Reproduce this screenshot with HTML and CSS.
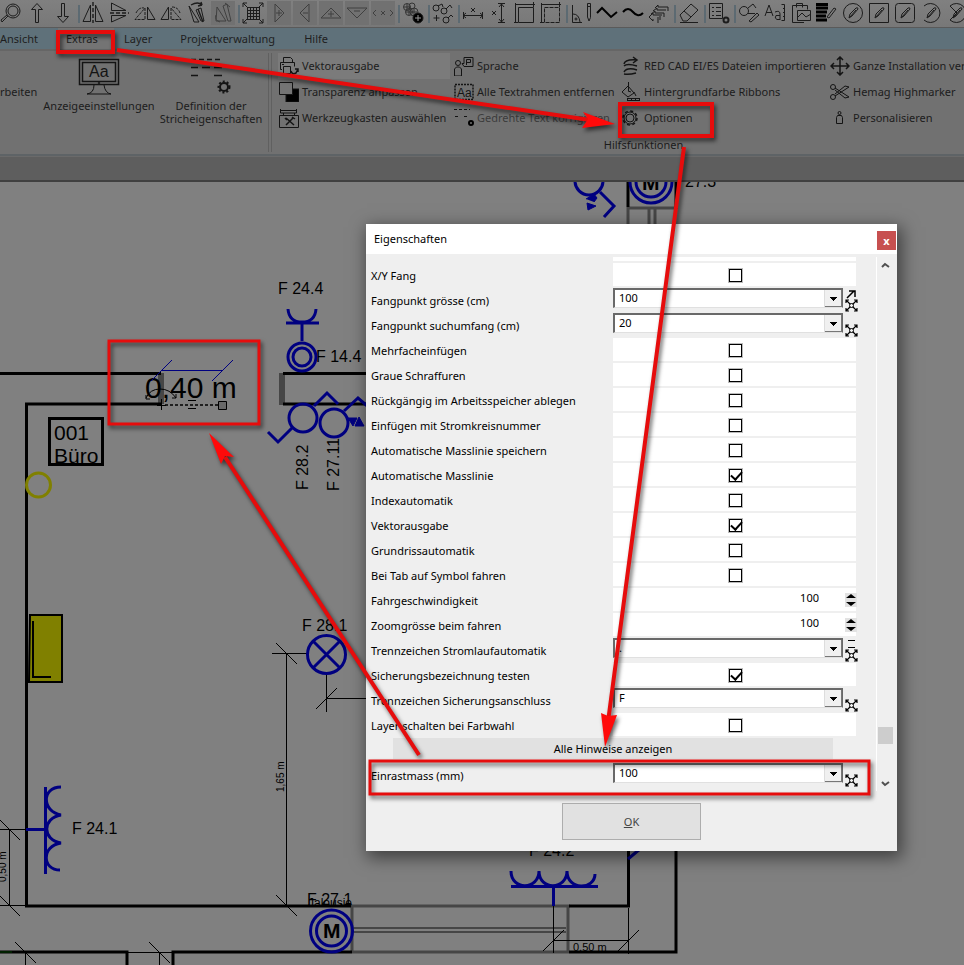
FILE: index.html
```html
<!DOCTYPE html>
<html lang="de">
<head>
<meta charset="utf-8">
<title>Eigenschaften</title>
<link rel="stylesheet" href="styles.css">
</head>
<body>
<svg class="defs" aria-hidden="true">
  <symbol id="expand" viewBox="0 0 13 13"><path d="M1 4V1h3M9 1h3v3M12 9v3H9M4 12H1V9M1 1l11 11M12 1L1 12" fill="none" stroke="#000" stroke-width="1.2"/><circle cx="6.5" cy="6.5" r="2" fill="#efefef" stroke="#000"/></symbol>
  <symbol id="pen" viewBox="0 0 24 24"><path d="M8 17l1-4 6-6q2-1 2 1l-6 7-3 2M9 16l6-7"/></symbol>
</svg>
<div class="app">
  <div class="toolbar">
    <button aria-label="Suchen"><svg viewBox="0 0 24 24"><circle cx="14" cy="10" r="7"/><circle cx="14" cy="10" r="5"/><path d="M9 15l-6 6-1-2 6-5"/></svg></button>
    <button aria-label="Nach oben"><svg viewBox="0 0 24 24"><path d="M10.500 21.500V8.500h-4l5.500-6 5.500 6h-4v13z"/></svg></button>
    <button aria-label="Nach unten"><svg viewBox="0 0 24 24"><path d="M10.500 2.500v13h-4l5.500 6 5.500-6h-4v-13z"/></svg></button>
    <i class="sep"></i>
    <button aria-label="Horizontal spiegeln"><svg viewBox="0 0 24 24"><path d="M9.500 4v16.500H2zM14.500 4v16.500H22z"/><path d="M12 1v21" stroke-width="1.4" stroke-dasharray="4 2"/></svg></button>
    <button aria-label="Vertikal spiegeln"><svg viewBox="0 0 24 24"><path d="M4.500 2v7.500H19zM4.500 21v-6.500H19z"/><path d="M3 12h19" stroke-width="1.4" stroke-dasharray="4 2"/></svg></button>
    <button aria-label="Spiegeln links"><svg viewBox="0 0 24 24"><path d="M14.500 6v12.500H22z"/><path d="M12 7v11.500H2zM3 12q3-6 8-5" stroke-dasharray="3 1"/></svg></button>
    <button aria-label="Spiegeln rechts"><svg viewBox="0 0 24 24"><path d="M9.500 6v12.500H2z"/><path d="M12 7v11.500h10zM13 6q6 0 8 6" stroke-dasharray="3 1"/></svg></button>
    <button aria-label="Drehen"><svg viewBox="0 0 24 24"><path d="M4 5l10 16H9zM11 9l5-2 3 13h-3z"/><path d="M6 4q7-4 11 0l-1-3M17 4l-4 1M13 8l5 13" stroke-width="1.4"/></svg></button>
    <button class="on" aria-label="Drehen zurück"><svg viewBox="0 0 24 24"><path d="M6 6l9 14H5zM12 5l4-2 4 17h-3zM14 2l5 4M5 14q-2 5 4 7"/></svg></button>
    <i class="sep"></i>
    <button aria-label="Raster"><svg viewBox="0 0 24 24"><path d="M6.500 6v12M9.500 6v12M12.500 6v12M15.500 6v12M18.500 6v12M6 6.500h12M6 9.500h12M6 12.500h12M6 15.500h12M6 18.500h12"/><path d="M6 6L2 2M18 6l4-4M6 18l-4 4M18 18l4 4M2 6V2h4M18 2h4v4M22 18v4h-4M6 22H2v-4"/></svg></button>
    <button class="on" aria-label="Rechts plus"><svg viewBox="0 0 24 24"><path d="M8 3v18l9-9zM9 12h6M12 9v6"/></svg></button>
    <button class="on" aria-label="Links minus"><svg viewBox="0 0 24 24"><path d="M16 3v18l-9-9zM10 12h5"/></svg></button>
    <button class="on" aria-label="Oben plus"><svg viewBox="0 0 24 24"><path d="M2 17h20L12 7zM12 10v6M9 13h6"/></svg></button>
    <button class="on" aria-label="Unten minus"><svg viewBox="0 0 24 24"><path d="M2 7h20L12 17zM9 10h6"/></svg></button>
    <button class="on" aria-label="X-Achse"><svg viewBox="0 0 24 24"><path d="M5 9l-3 3 3 3M19 9l3 3-3 3M10 10l4 4M14 10l-4 4"/></svg></button>
    <i class="sep"></i>
    <button aria-label="Verschieben"><svg viewBox="0 0 24 24"><g stroke="#333"><circle cx="6" cy="6" r="3.500"/><circle cx="11" cy="5" r="3"/><circle cx="8" cy="11" r="3.500"/><circle cx="13" cy="11" r="4"/><path d="M3 6h6M6 3v6M5 11h6M8 8v6M10 11h6M13 8v6"/></g><circle cx="17" cy="17" r="5" fill="#000"/><path d="M14 17h6M17 14v6" stroke="#999"/></svg></button>
    <i class="sep"></i>
    <button aria-label="Symbole hinzufügen"><svg viewBox="0 0 24 24"><circle cx="5" cy="7" r="3"/><circle cx="13" cy="10" r="3"/><circle cx="15" cy="19" r="3"/><path d="M7 5l4-2 1 3M15 8l4-4 2 3M17 17l3-3 2 2M5.500 14v6M2.500 17h6"/></svg></button>
    <i class="sep"></i>
    <button aria-label="Mass horizontal"><svg viewBox="0 0 24 24"><path d="M2.500 11v7M21.500 11v7M2 14.500h20M5 12l-3 2.500 3 2.500M19 12l3 2.500-3 2.500M10 7l4 4M14 7l-4 4"/></svg></button>
    <button aria-label="Mass vertikal"><svg viewBox="0 0 24 24"><path d="M11 2.500h7M11 21.500h7M14.500 3v18M12 6l2.500-3L17 6M12 18l2.500 3 2.500-3M5 10l4 4M9 10l-4 4"/></svg></button>
    <button aria-label="Rechteck vermassen"><svg viewBox="0 0 24 24"><path d="M5.500 6.500h15v15h-15zM2 3.500h20M2.500 2v20M1 21.500h4M20.500 1v5"/></svg></button>
    <button aria-label="Fläche vermassen"><svg viewBox="0 0 24 24"><path d="M5.500 6.500h15v15h-15z" stroke-dasharray="4 1"/><path d="M2 3.500h20M2.500 2v20M1 21.500h4M20.500 1v5"/></svg></button>
    <i class="sep"></i>
    <button aria-label="Winkel"><svg viewBox="0 0 24 24"><path d="M3.500 4v17.500H13M4 13q6 0 7 8M18.500 2.500h3v14L20 20l-1.500-4zM18 5.500h4"/><circle cx="7" cy="18" r="1"/></svg></button>
    <button aria-label="Polylinie"><svg viewBox="0 0 24 24"><path d="M2 12l5-5 9 9 6-5" stroke="#000" stroke-width="2"/></svg></button>
    <button aria-label="Kurve"><svg viewBox="0 0 24 24"><path d="M2 11q5-6 10 0t10 1" stroke="#000" stroke-width="2"/></svg></button>
    <button aria-label="Pfeile"><svg viewBox="0 0 24 24"><path d="M8 7l3-3v2h10M6 10l4-3v2h9M4 13l4-3v2h9M2 16l4-4v2h9M2 16l4 4v-2M11 16v6M13 15v4M17 12v4M21 6v4"/></svg></button>
    <i class="sep"></i>
    <button aria-label="Radierer"><svg viewBox="0 0 24 24"><path d="M3 14L14 3l7 6-11 11H6zM7 10l7 6M3 21.500h18"/></svg></button>
    <i class="sep"></i>
    <button aria-label="Liste einstellen"><svg viewBox="0 0 24 24"><path d="M2.500 2.500h13v15h-13zM5 6.500h2M5 10.500h2M5 14.500h2M9 6.500h5M9 10.500h5M9 14.500h5"/><circle cx="19" cy="19" r="2.500" stroke-width="2"/></svg></button>
    <i class="sep"></i>
    <button aria-label="Symbol bearbeiten"><svg viewBox="0 0 24 24"><circle cx="7" cy="10" r="4.500"/><path d="M11 7l5-4 3 4M11 12.500h7M12 20l8-8 2 2-8 7z"/></svg></button>
    <button aria-label="Textgrösse"><svg viewBox="0 0 24 24"><path d="M2 15L6 4l4 11M3 11.500h6M12 11q5-2 5 2v6M17 14.500h-4q-2 3 1 4h3M18.500 3.500h3v16h-3M20 7.500h2M20 11.500h2M20 15.500h2"/></svg></button>
    <button aria-label="Einfügen"><svg viewBox="0 0 24 24"><path d="M15 21.500H3.500v-17h15v4M7.500 6.500v-4h6v4M8.500 9.500h13v10h-13zM8 17l5-5 4 4 5-3"/></svg></button>
    <button aria-label="Linienstärke"><svg viewBox="0 0 24 24"><path d="M1 3.500h12M1 7h12M1 11h11M1 15h10M1 19h11" stroke="#000" stroke-width="3"/><path d="M12 16l7-9 2 1-7 9z"/></svg></button>
    <button aria-label="Kreis"><svg viewBox="0 0 24 24"><circle cx="12" cy="12" r="9.500"/><use href="#pen"/></svg></button>
    <button aria-label="Rechteck"><svg viewBox="0 0 24 24"><path d="M2.500 2.500h19v19h-19z"/><use href="#pen"/></svg></button>
    <button aria-label="Abgerundetes Rechteck"><svg viewBox="0 0 24 24"><rect x="2.500" y="2.500" width="19" height="19" rx="3"/><use href="#pen"/></svg></button>
    <button aria-label="Bogen"><svg viewBox="0 0 24 24"><path d="M5 5a9.500 9.500 0 1 1 0 14"/><use href="#pen"/></svg></button>
    <button aria-label="Sektor"><svg viewBox="0 0 24 24"><path d="M5 5a9.500 9.500 0 1 1 0 14l7-7z"/><use href="#pen"/></svg></button>
  </div>
  <nav class="tabs">
    <a href="#" class="first">Ansicht</a><a href="#" class="active">Extras</a><a href="#" class="layer">Layer</a><a href="#" class="project">Projektverwaltung</a><a href="#">Hilfe</a>
  </nav>
  <div class="ribbon">
    <div class="group view">
      <button class="edge">rbeiten</button>
      <button class="big display">
        <svg viewBox="0 0 42 38"><path d="M1.500 1.500h39v25h-39zM4.500 4.500h33v19h-33z" stroke-width="1.500"/><path d="M16 27q0 8-7 9h24q-6-1-7-9"/><circle cx="21" cy="25" r=".8"/><text x="11" y="19" font-size="16">Aa</text></svg>
        Anzeigeeinstellungen
      </button>
      <button class="big">
        <svg viewBox="0 0 42 38"><path d="M1 1.500h31" stroke-dasharray="5 3" stroke-width="1.500"/><path d="M1 9.500h7M12 9.500h8M24 9.500h8M1 17.500h7M24 17.500h8" stroke-width="1.500"/><circle cx="34" cy="29" r="4" stroke-width="2"/><circle cx="34" cy="29" r="5.500" stroke-width="2" stroke-dasharray="2 2"/></svg>
        Definition der<br>Stricheigenschaften
      </button>
    </div>
    <div class="group tools">
      <div class="cols">
        <div class="col">
          <button class="hot"><svg viewBox="0 0 20 20"><path d="M4.500 6.500v-5h7l2 2v3M3 13.500H1.500v-7h14v4M4.500 10.500h7v7h-7zM3 8.500h2"/><path d="M12 15q1 4 5 2l2-4M16 13h3v3" stroke-width="1.500"/></svg>Vektorausgabe</button>
          <button><svg viewBox="0 0 20 20"><path d="M7 7h13v13H7z" fill="#000"/><path d="M.5.5h13v12H.5z" fill="#747474"/></svg>Transparenz anpassen</button>
          <button><svg viewBox="0 0 20 20"><path d="M1.500 1v4h16V1M2 2.500h16M.5 7.500h19v12H.5zM4.500 7V5M15.500 7V5"/><path d="M7 10l8 7M14 10l-7 7M6 10l2 2M13 9l3 2" stroke-width="1.500"/></svg>Werkzeugkasten auswählen</button>
        </div>
        <div class="col">
          <button><svg viewBox="0 0 20 20"><circle cx="4" cy="7" r="2.500"/><path d="M.5 20v-7l2-2h3l2 2v7zM8 7.500h2v-6h9v9h-9zM12.500 9V3.500h4v3h-4"/></svg>Sprache</button>
          <button><svg viewBox="0 0 20 20"><path d="M1 2.500h18v15H1z" stroke-width="1.500" stroke-dasharray="2 1"/><text x="3" y="15" font-size="12">Aa</text></svg>Alle Textrahmen entfernen</button>
          <button class="dim"><svg viewBox="0 0 20 20"><path d="M0 1.500h16M1 8.500h5M10 8.500h5" stroke-dasharray="3 2"/><circle cx="17" cy="15" r="2" stroke="#000" stroke-width="2"/></svg>Gedrehte Text korrigieren</button>
        </div>
        <div class="col">
          <button><svg viewBox="0 0 20 20"><path d="M3 8q1-5 13-4M12 1l4 3-4 3M3 10q3-3 13 0M3 16q3-5 13-2M3 18q5 1 12-1" stroke-width="1.500"/></svg>RED CAD EI/ES Dateien importieren</button>
          <button><svg viewBox="0 0 20 20"><path d="M1 10l6-6 6 7-6 4zM7.500 9V0M7 9l3 1M6 18.500h13M6 16.500h13M6.500 16v3M10.500 16v3M14.500 16v3M18.500 16v3M13 10l2 4"/></svg>Hintergrundfarbe Ribbons</button>
          <button><svg viewBox="0 0 20 20"><circle cx="9" cy="10" r="4"/><circle cx="9" cy="10" r="6"/><circle cx="9" cy="10" r="7" stroke-width="1.500" stroke-dasharray="3 2.500"/></svg>Optionen</button>
        </div>
        <div class="col last">
          <button><svg viewBox="0 0 20 20"><path d="M10 1v18M1 10h18M7 4l3-3 3 3M7 16l3 3 3-3M4 7l-3 3 3 3M16 7l3 3-3 3" stroke-width="1.500"/></svg>Ganze Installation verschieben</button>
          <button><svg viewBox="0 0 20 20"><circle cx="3" cy="5" r="2.500"/><circle cx="3" cy="15" r="2.500"/><path d="M5 6l14 9-4 1-10-8M5 14l14-9-4-1-10 8"/></svg>Hemag Highmarker</button>
          <button><svg viewBox="0 0 20 20"><path d="M7.500 7.500h4l1 2v6h-6v-6z"/><circle cx="9.500" cy="5" r="1.500"/></svg>Personalisieren</button>
        </div>
      </div>
      <div class="caption">Hilfsfunktionen</div>
    </div>
  </div>
  <div class="band"></div>
  <main class="plan">
    <svg class="drawing" role="img" aria-label="Grundriss">
      <g transform="translate(0 -182)" fill="none" stroke-linecap="butt">
        <text x="573" y="951" fill="#000" class="mid">0,50 m</text>
        <g stroke="#464646" stroke-width="3">
          <path d="M351 906h219M352 906v47M352 952h217M568 906v47M628 207v20M628 208h48M649 209v20M655 209v20"/>
          <path d="M353 928h213M353 932h213" stroke-width="2"/>
          <path d="M161 373v31M282 373v32" stroke-width="6"/>
        </g>
        <g stroke="#000" stroke-width="3">
          <path d="M0 373.500h161M283 373.500h90M283 404h90M161 404H26.500v502H351M569 906h59.500V840M569 952h107V840M0 952h127v14M352 952H173v14M628 175v32M676 175v34"/>
          <path d="M49.500 418.500h53v46h-53z"/>
          <path d="M30 615h32v67H29z" fill="#808000" stroke-width="2"/>
          <path d="M33 621v56h18" stroke-width="2"/>
        </g>
        <g stroke="#000" stroke-width="1">
          <path d="M272 653.500h35M286.500 653v253M276 643l21 21M276 895l21 21M326.500 674v38M326 698.500h60M316 709l21-21"/>
          <path d="M0 829.500h27M9.500 829v76M0 905.500h26M-1 819l21 21M-1 895l21 21M15 942l21 21M25.500 953v13M127 952.500h46M159.500 952v14M149 942l21 21M553.500 906v47M628.500 908v46M553 940.500h75M543 951l21-21M618 951l21-21"/>
        </g>
        <path d="M0 952h12" stroke="#004000"/>
        <g fill="#000" class="small">
          <text transform="translate(284 792) rotate(-90)">1,65 m</text>
          <text transform="translate(6 882) rotate(-90)">0,50 m</text>
        </g>
        <g fill="#000" class="cad">
          <text x="278" y="294">F 24.4</text>
          <text x="316" y="362">F 14.4</text>
          <text x="302" y="631">F 28.1</text>
          <text x="72" y="834">F 24.1</text>
          <text x="307" y="905">F 27.1</text>
          <text x="529" y="856">F 24.2</text>
          <text x="685" y="187">27.3</text>
          <text transform="translate(308 490) rotate(-90)">F 28.2</text>
          <text transform="translate(339 491) rotate(-90)">F 27.11</text>
          <text x="308" y="907" class="blind">Jalousie</text>
          <text x="54" y="440" class="room">001</text>
          <text x="54" y="463" class="room">Büro</text>
          <text x="145" y="398" class="measure">0,40 m</text>
        </g>
        <circle cx="38.500" cy="485" r="12" stroke="#808000" stroke-width="3"/>
        <g stroke="#000080" stroke-width="3">
          <circle cx="302" cy="357" r="14"/><circle cx="302" cy="357" r="9"/>
          <path d="M302 341V323M286 323h33M288 309q1 13 14 13t14-13"/>
          <circle cx="303" cy="418" r="14"/><circle cx="334" cy="423" r="14"/>
          <path d="M268 432l10 10 15-15M314 406l13-13 11 11M344 411l14-13 14 12"/>
          <path d="M348 418h9l-4 8zM355 426h9l-5-9z" fill="#000080" stroke-width="1"/>
          <circle cx="326.500" cy="654.500" r="19"/><path d="M313 641l27 27M340 641l-27 27"/>
          <path d="M26 829.500h20M45.500 787v87M61 787c-20 0-19 25 0 28c-19 3-19 25 0 28c-20 3-19 27-1 27"/>
          <path d="M553.500 906V887M511 886.500h87M511 871c0 20 28 19 28 0c0 20 28 19 28 0c0 20 28 19 28 3"/>
          <circle cx="331.500" cy="931" r="21"/><circle cx="331.500" cy="931" r="15"/>
          <circle cx="651" cy="182" r="21"/><circle cx="651" cy="182" r="15"/>
          <circle cx="589" cy="181" r="14"/><path d="M600 192l14 14-10 11M628 859l12-10"/>
          <path d="M586 199l8-5 3 4-3 4M587 203l9 3-8 4z" fill="#000080" stroke-width="1"/>
        </g>
        <g fill="#000" class="motor"><text x="323" y="938">M</text><text x="642" y="190">M</text></g>
        <path d="M161 370.500h61M151 381l21-21M212 381l21-21" stroke="#000080"/>
        <g stroke="#000"><path d="M146 398q4-9 14-9t16 9M146 395v4h4M172 398h4v-4M161.500 399v11M157 405.500h9M188 400.500h8M188 408.500h8"/><path d="M165 405h54" stroke-width="1.500" stroke-dasharray="3 2"/><path d="M218.500 401.500h8v8h-8z" fill="#686868"/></g>
      </g>
    </svg>
  </main>
</div>

<section class="dialog" role="dialog" aria-labelledby="dialog-title">
  <header><h1 id="dialog-title">Eigenschaften</h1><button class="close" aria-label="Schliessen">x</button></header>
  <div class="body">
    <div class="props">
      <div class="stub"></div>
      <div class="row"><label for="p0">X/Y Fang</label><span class="cell"><input type="checkbox" id="p0"></span></div>
      <div class="row"><label for="p1">Fangpunkt grösse (cm)</label><span class="combo"><select id="p1"><option>100</option></select></span><svg class="expand up"><use href="#expand" y="9" width="13" height="13"/><path d="M2 8l7-7M4 1h6v6" fill="none" stroke="#000" stroke-width="1.500"/></svg></div>
      <div class="row"><label for="p2">Fangpunkt suchumfang (cm)</label><span class="combo"><select id="p2"><option>20</option></select></span><svg class="expand"><use href="#expand" width="13" height="13"/></svg></div>
      <div class="row"><label for="p3">Mehrfacheinfügen</label><span class="cell"><input type="checkbox" id="p3"></span></div>
      <div class="row"><label for="p4">Graue Schraffuren</label><span class="cell"><input type="checkbox" id="p4"></span></div>
      <div class="row"><label for="p5">Rückgängig im Arbeitsspeicher ablegen</label><span class="cell"><input type="checkbox" id="p5"></span></div>
      <div class="row"><label for="p6">Einfügen mit Stromkreisnummer</label><span class="cell"><input type="checkbox" id="p6"></span></div>
      <div class="row"><label for="p7">Automatische Masslinie speichern</label><span class="cell"><input type="checkbox" id="p7"></span></div>
      <div class="row"><label for="p8">Automatische Masslinie</label><span class="cell"><input type="checkbox" id="p8" checked></span></div>
      <div class="row"><label for="p9">Indexautomatik</label><span class="cell"><input type="checkbox" id="p9"></span></div>
      <div class="row"><label for="p10">Vektorausgabe</label><span class="cell"><input type="checkbox" id="p10" checked></span></div>
      <div class="row"><label for="p11">Grundrissautomatik</label><span class="cell"><input type="checkbox" id="p11"></span></div>
      <div class="row"><label for="p12">Bei Tab auf Symbol fahren</label><span class="cell"><input type="checkbox" id="p12"></span></div>
      <div class="row"><label for="p13">Fahrgeschwindigkeit</label><span class="cell number"><input type="text" id="p13" value="100"><svg class="spin" viewBox="0 0 12 14"><path d="M1 5l5-4 5 4zM1 9h10l-5 4z"/></svg></span></div>
      <div class="row"><label for="p14">Zoomgrösse beim fahren</label><span class="cell number"><input type="text" id="p14" value="100"><svg class="spin" viewBox="0 0 12 14"><path d="M1 5l5-4 5 4zM1 9h10l-5 4z"/></svg></span></div>
      <div class="row"><label for="p15">Trennzeichen Stromlaufautomatik</label><span class="combo"><select id="p15"><option>.</option></select></span><svg class="expand up"><use href="#expand" y="9" width="13" height="13"/><path d="M3 .5h7M3 7.500h7" stroke="#000"/></svg></div>
      <div class="row"><label for="p16">Sicherungsbezeichnung testen</label><span class="cell"><input type="checkbox" id="p16" checked></span></div>
      <div class="row"><label for="p17">Trennzeichen Sicherungsanschluss</label><span class="combo"><select id="p17"><option>F</option></select></span><svg class="expand"><use href="#expand" width="13" height="13"/></svg></div>
      <div class="row"><label for="p18">Layer schalten bei Farbwahl</label><span class="cell"><input type="checkbox" id="p18"></span></div>
      <div class="row wide"><button>Alle Hinweise anzeigen</button></div>
      <div class="row"><label for="p20">Einrastmass (mm)</label><span class="combo"><select id="p20"><option>100</option></select></span><svg class="expand"><use href="#expand" width="13" height="13"/></svg></div>
    </div>
    <div class="scroll">
      <svg viewBox="0 0 15 10"><path d="M4 7l3-3 4 3"/></svg>
      <div class="thumb"></div>
      <svg viewBox="0 0 15 10"><path d="M4 3l3 3 4-3"/></svg>
    </div>
  </div>
  <footer><button class="ok"><u>O</u>K</button></footer>
</section>

<svg class="notes" aria-hidden="true">
  <g fill="none" stroke="#e60c0c" stroke-width="4">
    <path d="M58 32h55v20H58zM620 104h92v32h-92z"/>
    <path d="M109 341h150v83H109zM370 761h499v33H370z" stroke-width="3"/>
    <path d="M117 50L590 120M684 147L608 722M419 755L225 457"/>
  </g>
  <path fill="#ff0a0a" d="M615 124l-32-12 5 7-6 9zM605 747l-4-34 7 3 9-1zM209 433l25 24-9-1-4 8z"/>
</svg>
</body>
</html>
```
FILE: styles.css
```css
* { box-sizing: border-box; }
body { margin: 0; height: 100vh; position: relative; overflow: hidden; background: #808080; font: 11px/16px "Noto Sans", "Open Sans", sans-serif; color: #000; }
button, input, select { font: inherit; color: inherit; margin: 0; padding: 0; border: 0; background: none; }
.defs { position: absolute; width: 0; height: 0; }
.app { display: flex; flex-direction: column; height: 100%; }

.toolbar { display: flex; flex: none; height: 28px; padding: 1px 0 2px; margin-left: -2px; background: linear-gradient(#808080, #787878); border-bottom: 1px solid #5a5a5a; overflow: hidden; }
.toolbar button { flex: none; width: 24px; height: 24px; margin: 0 1px; }
.toolbar .on { background: #717171; }
.toolbar .on svg { stroke: #404040; }
.toolbar svg { display: block; width: 24px; height: 24px; fill: none; stroke: #1c1c1c; stroke-width: 1; }
.sep { flex: none; width: 4px; height: 18px; margin-top: 4px; border-right: 2px solid #5c6a72; }

.tabs { display: flex; flex: none; height: 21px; background: #5f717a; line-height: 22px; }
.tabs a { color: #1e1e1e; text-decoration: none; white-space: nowrap; }
.tabs .first { width: 58px; }
.tabs .active { width: 56px; padding-left: 8px; background: #747474; }
.tabs .layer { padding: 0 28px 0 10px; }
.tabs .project { padding-right: 29px; }

.ribbon { display: flex; flex: none; height: 107px; padding: 2px 0; background: #717171; border-top: 2px solid #666; border-bottom: 2px solid #5e6366; color: #1c1c1c; overflow: hidden; }
.ribbon svg { fill: none; stroke: #141414; }
.ribbon svg text { font-family: "Liberation Sans", sans-serif; fill: #141414; stroke: none; }
.group.view { display: flex; flex: none; width: 269px; align-items: flex-start; border-right: 1px solid #606060; }
.edge { flex: none; width: 39px; padding-top: 31px; text-align: left; }
.big { flex: none; width: 104px; line-height: 13px; padding-top: 5px; white-space: nowrap; }
.big svg { display: block; width: 42px; height: 38px; margin: 0 auto 3px; }
.display { width: 120px; }
.group.tools { flex: none; width: 746px; margin-left: 2px; padding-left: 6px; border-left: 1px solid #606060; }
.cols { display: flex; }
.col { display: flex; flex: none; flex-direction: column; width: 175px; }
.col + .col { width: 167px; }
.cols .col.last { width: 240px; padding-left: 42px; }
.col button { display: flex; align-items: center; gap: 3px; height: 26px; padding-left: 1px; text-align: left; white-space: nowrap; }
.col svg { width: 20px; height: 20px; flex: none; }
.col .hot { background: #7b7b7b; margin-right: 3px; }
.col .dim { color: #3c3c3c; }
.caption { text-align: center; line-height: 28px; padding-right: 8px; }
.band { flex: none; height: 26px; background: #5e5e5e; border-top: 1px solid #6a6a6a; border-bottom: 2px solid #404040; }

.plan { flex: 1; min-height: 0; overflow: hidden; background: #808080; }
.drawing { display: block; width: 100%; height: 100%; font-family: "Liberation Sans", sans-serif; }
.cad { font-size: 16px; }
.small { font-size: 10px; }
.mid { font-size: 11px; }
.blind { font-size: 12px; }
.room { font-size: 21px; }
.measure { font-size: 30px; }
.motor { font-size: 21px; font-weight: bold; }

.dialog { position: absolute; left: 366px; top: 224px; width: 531px; background: #efefef; box-shadow: 3px 5px 16px 2px rgba(0, 0, 0, .5); }
.dialog header { display: flex; justify-content: space-between; align-items: flex-start; height: 30px; padding: 7px 1px 0 8px; background: #fff; }
.dialog h1 { margin: 0; font: inherit; }
.close { width: 19px; height: 19px; background: #c75050; color: #fff; font-weight: bold; line-height: 17px; }
.body { display: flex; justify-content: space-between; padding: 3px 4px 0 5px; }
.props { flex: 1; }
.stub { height: 4px; margin: 0 20px 2px 242px; background: #fff; }
.row { display: grid; grid-template-columns: 242px 243px; height: 25px; align-items: start; position: relative; }
.row label { line-height: 26px; white-space: nowrap; }
.cell { display: flex; justify-content: center; align-items: center; height: 23px; padding: 1px 0 0 1px; background: #fff; }
.cell input[type=checkbox] { appearance: none; position: relative; width: 13px; height: 13px; border: 1px solid #000; background: #fff; outline: 1px solid #bbb; }
.cell input:checked::after { content: ""; position: absolute; left: 1px; top: 1px; width: 9px; height: 5px; border: solid #000; border-width: 0 0 2px 2px; transform: rotate(-48deg); }
.cell.number { justify-content: flex-end; gap: 26px; padding: 0; }
.number input { width: 160px; text-align: right; height: 18px; margin-bottom: 5px; }
.spin { width: 12px; height: 14px; background: #e2e2e2; margin-right: -1px; }
.combo { position: relative; width: 230px; height: 20px; border: solid #696969; border-width: 2px 1px 1px 2px; border-bottom-color: #e0e0e0; background: #fff; }
.combo select { display: block; width: 100%; height: 16px; padding-left: 4px; appearance: none; }
.combo::after { content: ""; position: absolute; right: 0; top: 0; width: 16px; height: 16px; background: linear-gradient(#000, #000) 5px 7px / 7px 1px no-repeat, linear-gradient(#000, #000) 6px 8px / 5px 1px no-repeat, linear-gradient(#000, #000) 7px 9px / 3px 1px no-repeat, linear-gradient(#000, #000) 8px 10px / 1px 1px no-repeat, #f0f0f0; border: solid #777; border-width: 0 1px 1px 0; box-shadow: -1px 0 #ddd; pointer-events: none; }
.expand { position: absolute; left: 474px; top: 11px; width: 13px; height: 13px; }
.expand.up { top: 2px; height: 22px; }
.row.wide { display: block; padding: 0 43px 0 22px; }
.wide button { width: 100%; height: 21px; background: #e1e1e1; }
.scroll { display: flex; flex-direction: column; flex: none; width: 17px; height: 534px; border-left: 1px solid #fff; align-items: center; padding: 3px 0 2px; }
.scroll svg { width: 15px; height: 10px; fill: none; stroke: #505050; stroke-width: 2; }
.thumb { width: 15px; height: 17px; margin: auto 0 35px; background: #cdcdcd; }
.dialog footer { display: flex; justify-content: center; padding: 12px 0 11px; }
.ok { width: 139px; height: 37px; border: 1px solid #adadad; background: #e1e1e1; color: #444; }

.notes { position: absolute; left: 0; top: 0; width: 100%; height: 100%; pointer-events: none; filter: drop-shadow(2px 3px 2px rgba(0, 0, 0, .6)); }
```
